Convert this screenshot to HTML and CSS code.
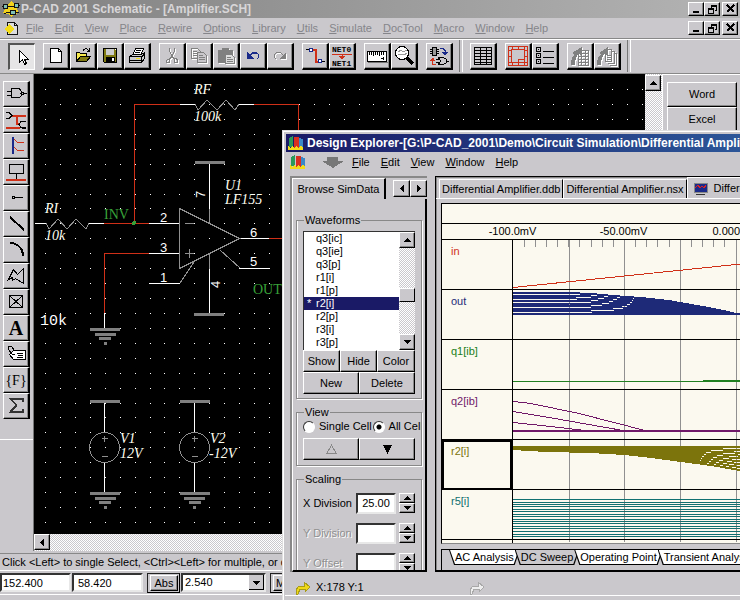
FILE: index.html
```html
<!DOCTYPE html>
<html lang="en">
<head>
    <meta charset="UTF-8">
    <meta name="viewport" content="width=device-width, initial-scale=1.0">
    <title>P-CAD 2001 Schematic - [Amplifier.SCH]</title>
    <link rel="stylesheet" href="styles.css">
</head>
<body>
    <!-- Schematic editor -->
    <div class="schematic">
        <header class="titlebar">
            <svg class="app-icon" width="18" height="16" viewBox="0 0 18 16">
                <path d="M9 0l3 3 5 1-2 4 2 4-5 1-3 3-3-3-5-1 2-4-2-4 5-1z" fill="#f2d21c"/>
                <path d="M1 3h4v4H1zM12 2h4v4h-4zM8 9h5v4H8z" fill="#7ec0b8" stroke="#111"/>
                <path d="M0 5h2M5 5h7M16 4h2M4 11h4M13 11h4M2 13l4-2" stroke="#111" fill="none"/>
            </svg>
            <h1>P-CAD 2001 Schematic - [Amplifier.SCH]</h1>
            <div class="win-buttons">
                <button type="button" aria-label="Minimize"><svg width="11" height="10"><path d="M2 8h6" stroke="#000" stroke-width="2"/></svg></button>
                <button type="button" aria-label="Restore"><svg width="11" height="10"><path d="M4 1h6M4 2h6M4.500 1v3M9.500 1v5h-2M1 4h6M1 5h6M1.500 4v5h5V4" fill="none" stroke="#000"/></svg></button>
                <button type="button" class="close" aria-label="Close"><svg width="11" height="10"><path d="M2 1l7 7M9 1L2 8" stroke="#000" stroke-width="2"/></svg></button>
            </div>
        </header>

        <nav class="menubar">
            <svg class="doc-icon" width="15" height="15" viewBox="0 0 15 15">
                <path d="M3.500 1.500h7l3 3v9h-10z" fill="#ddd" stroke="#111"/>
                <path d="M10.500 1.500v3h3" fill="none" stroke="#111"/>
                <path d="M5 3l5 5-5 5-5-5z" fill="#f4dc18"/>
            </svg>
            <a href="#"><u>F</u>ile</a>
            <a href="#"><u>E</u>dit</a>
            <a href="#"><u>V</u>iew</a>
            <a href="#"><u>P</u>lace</a>
            <a href="#"><u>R</u>ewire</a>
            <a href="#"><u>O</u>ptions</a>
            <a href="#"><u>L</u>ibrary</a>
            <a href="#"><u>U</u>tils</a>
            <a href="#"><u>S</u>imulate</a>
            <a href="#"><u>D</u>ocTool</a>
            <a href="#"><u>M</u>acro</a>
            <a href="#"><u>W</u>indow</a>
            <a href="#"><u>H</u>elp</a>
            <div class="win-buttons">
                <button type="button" aria-label="Minimize document"><svg width="11" height="10"><path d="M2 8h6" stroke="#000" stroke-width="2"/></svg></button>
                <button type="button" aria-label="Restore document"><svg width="11" height="10"><path d="M4 1h6M4 2h6M4.500 1v3M9.500 1v5h-2M1 4h6M1 5h6M1.500 4v5h5V4" fill="none" stroke="#000"/></svg></button>
                <button type="button" class="close" aria-label="Close document"><svg width="11" height="10"><path d="M2 1l7 7M9 1L2 8" stroke="#000" stroke-width="2"/></svg></button>
            </div>
        </nav>

        <div class="toolbar">
            <div class="tool-group">
                <button type="button" class="tool pressed" aria-label="Select"><svg viewBox="0 0 24 24"><path d="M9.500 5.500v12l3-3 2 5 2-1-2-4h4z" fill="#fff" stroke="#000"/></svg></button>
            </div>
            <div class="tool-group">
                <button type="button" class="tool" aria-label="New"><svg viewBox="0 0 24 24"><path d="M6.500 4.500h8l3 3v11h-11z" fill="#fff" stroke="#000"/><path d="M14.500 4.500v3h3" fill="none" stroke="#000"/></svg></button>
                <button type="button" class="tool" aria-label="Open"><svg viewBox="0 0 24 24"><path d="M5.500 17.500v-9h3l1 1h6v3" fill="#f6e94e" stroke="#000"/><path d="M5.500 17.500l4-5h10l-4 5z" fill="#807a12" stroke="#000"/><path d="M12 6.500c2-3 5-2 6 1M18.500 4v4M15.500 7.500h3" fill="none" stroke="#000"/></svg></button>
                <button type="button" class="tool" aria-label="Save"><svg viewBox="0 0 24 24"><path d="M5.500 4.500h13v14h-12l-1-1z" fill="#807a12" stroke="#000"/><path d="M8 5h8v6H8z" fill="#ccc"/><path d="M8 13h9v5H8z" fill="#000"/><path d="M14 14h2v3h-2zM17 5h1v1h-1z" fill="#fff"/></svg></button>
                <button type="button" class="tool" aria-label="Print"><svg viewBox="0 0 24 24"><path d="M7.500 11.500l3-7h8l-3 7z" fill="#fff" stroke="#000"/><path d="M11 6.500h5M10 8.500h5" stroke="#000"/><path d="M4.500 12.500l3-2h9l3-2v6l-3 4h-12z" fill="#ccc" stroke="#000"/><path d="M5 12.500h12M5 16.500h12M16.500 12v6M17 12.500l2-2" stroke="#000" fill="none"/><path d="M11 14h4v1h-4z" fill="#f4dc18"/></svg></button>
            </div>
            <div class="tool-group">
                <button type="button" class="tool" aria-label="Cut"><svg class="off" viewBox="0 0 24 24"><path d="M9.500 4v3l3 6 2 2M14.500 4v3l-3 6-2 2"/><path d="M7.500 15.500h2v3h-3v-2zM14.500 14.500h2l1 2v2h-3z"/></svg></button>
                <button type="button" class="tool" aria-label="Copy"><svg class="off" viewBox="0 0 24 24"><path d="M4.500 4.500h6l3 3v7h-9zM6 7.500h4M6 9.500h6M6 11.500h5"/><path d="M10.500 8.500h6l3 3v7h-9z" fill="#cac8cc"/><path d="M12 11.500h4M12 13.500h6M12 15.500h6"/></svg></button>
                <button type="button" class="tool" aria-label="Paste"><svg class="off" viewBox="0 0 24 24"><path d="M4 6h14v12H4zM8 4h6v3H8z" fill="#808080"/><path d="M11.500 10.500h6l3 3v6h-9z" fill="#ddd"/><path d="M13 13.500h4M13 15.500h6M13 17.500h6"/></svg></button>
                <button type="button" class="tool" aria-label="Undo"><svg viewBox="0 0 24 24"><path d="M8.500 11.500l3-3h4l2 2v3l-2 2M8.500 12.500l3-3h4l1 1" fill="none" stroke="#1a2a8a"/><path d="M6 8v7h7z" fill="#1a2a8a"/></svg></button>
                <button type="button" class="tool" aria-label="Redo"><svg class="off" viewBox="0 0 24 24"><path d="M15.500 11.500l-3-3h-4l-2 2v3l2 2"/><path d="M18 8v7h-7z" fill="#808080" stroke="none"/></svg></button>
            </div>
            <div class="tool-group">
                <button type="button" class="tool" aria-label="Wire"><svg viewBox="0 0 24 24"><path d="M8 5.500h4.500v12H16" fill="none" stroke="#d03018" stroke-width="2"/><path d="M3 5.500h4M18 17.500h4" stroke="#000"/><path d="M6.500 4.500h3v3h-3zM15.500 15.500h3v3h-3z" fill="#fff" stroke="#1a2a8a"/></svg></button>
                <button type="button" class="tool" aria-label="Rename net"><svg viewBox="0 0 24 24"><text x="2" y="8">NET0</text><path d="M2 10.500h20" stroke="#d03018"/><path d="M12 10v2M9 12h6l-3 3z" fill="#d03018" stroke="#d03018"/><text x="2" y="22">NET1</text></svg></button>
            </div>
            <div class="tool-group">
                <button type="button" class="tool" aria-label="Measure"><svg viewBox="0 0 24 24"><path d="M2.500 7.500h19v10h-19z" fill="#fff" stroke="#000"/><path d="M4.500 8v3M6.500 8v3M8.500 8v4M10.500 8v3M12.500 8v3M14.500 8v4M16.500 8v3M18.500 8v3M18.500 13v3M16 14.500h3" stroke="#000"/><path d="M3 18.500h20" stroke="#777"/></svg></button>
                <button type="button" class="tool" aria-label="Zoom"><svg viewBox="0 0 24 24"><path d="M15 14l6 6" stroke="#000" stroke-width="3"/><circle cx="10" cy="9" r="6.500" fill="#fff" stroke="#000"/><path d="M6 8l3-2 2 2 4-2M6 11l3-1 3 1 3-2" fill="none" stroke="#999"/></svg></button>
            </div>
            <div class="tool-group">
                <button type="button" class="tool" aria-label="Gates"><svg viewBox="0 0 24 24"><path d="M5.500 3.500h4v8h-4zM3 5.500h2M3 7.500h2M3 9.500h2M10 5.500h2M10 7.500h2M10 9.500h2" fill="#999" stroke="#000"/><path d="M11.500 13.500h3c4 0 5 2 5 3.500s-1 3.500-5 3.500h-3l2-3.500zM9 15.500h3M9 18.500h3M20 17.500h2" fill="none" stroke="#000"/><path d="M13 4.500h3l2 2v3" fill="none" stroke="#1a2a8a"/><path d="M15 8h6l-3 4z" fill="#1a2a8a"/><path d="M9 20.500H5.500V16" fill="none" stroke="#d03018"/><path d="M3 17h5l-2-4z" fill="#d03018"/></svg></button>
            </div>
            <div class="divider"></div>
            <div class="tool-group">
                <button type="button" class="tool" aria-label="Table"><svg viewBox="0 0 24 24"><path d="M3.500 3.500h17v17h-17zM3 6.500h18M3 9.500h18M3 12.500h18M3 15.500h18M3 18.500h18M9.500 3v18M15.500 3v18" fill="none" stroke="#000"/></svg></button>
            </div>
            <div class="tool-group">
                <button type="button" class="tool" aria-label="Sheet"><svg viewBox="0 0 24 24"><path d="M2.500 2.500h19v19h-19zM5.500 5.500h13v13h-13zM12.500 15.500h6M12.500 15v3M6 3v2M12 3v2M18 3v2M6 19v2M12 19v2M18 19v2M3 6h2M3 12h2M3 18h2M19 6h2M19 12h2M19 18h2" fill="none" stroke="#d03018"/></svg></button>
                <button type="button" class="tool" aria-label="List"><svg viewBox="0 0 24 24"><path d="M3.500 3.500h4v4h-4zM3.500 9.500h4v4h-4zM3.500 15.500h4v4h-4zM10 7.500h11M10 13.500h11M10 19.500h11M5 5.500h1M5 11.500h1M5 17.500h1" fill="none" stroke="#000"/></svg></button>
            </div>
            <div class="tool-group">
                <button type="button" class="tool" aria-label="To table"><svg class="off" viewBox="0 0 24 24"><path d="M3 21c0-6 1-9 4-10L4 9l10-6v9l-3-2c-3 2-4 5-4 11z" fill="#808080" stroke="none"/><path d="M10.500 6.500h10v15h-10zM10 9.500h11M10 12.500h11M10 15.500h11M10 18.500h11M13.500 6v15M17.500 6v15"/></svg></button>
                <button type="button" class="tool" aria-label="To pages"><svg class="off" viewBox="0 0 24 24"><path d="M10.500 5.500h6v12h-6zM17 7.500h2v12h-6M19 9.500h2v12h-6" /><path d="M2 21c0-6 1-9 4-10L4 9l9-6v9l-3-2c-3 2-4 5-4 11z" fill="#808080" stroke="none"/><path d="M12 11.500h4M12 13.500h4M12 15.500h4"/></svg></button>
            </div>
            <div class="divider"></div>
        </div>

        <div class="workspace">
            <aside class="palette">
                <div class="palette-tools">
                    <button type="button" class="tool" aria-label="Place part"><svg viewBox="0 0 24 24"><path d="M7.500 6.500h6c3 0 4 3 4 5s-1 4-4 4h-6zM3 9.500h4M3 13.500h4M20 11.500h3" fill="none" stroke="#000"/><circle cx="18.500" cy="11.500" r="1.500" fill="none" stroke="#000"/></svg></button>
                    <button type="button" class="tool" aria-label="Place wire"><svg viewBox="0 0 24 24"><path d="M8 7.500h14M12.500 7v9M12 15.500h4M2 19.500h14" stroke="#d03018" stroke-width="2" fill="none"/><path d="M2 4.500h3l3 3-3 3H2M22 13.500h-5l-2 3 2 3h5M18 20.500h4" fill="none" stroke="#000"/></svg></button>
                    <button type="button" class="tool" aria-label="Place bus"><svg viewBox="0 0 24 24"><path d="M9 3v17" stroke="#1a2a8a" stroke-width="2"/><path d="M10 5l3 3h7M10 13l3 3h7" fill="none" stroke="#d03018"/></svg></button>
                    <button type="button" class="tool" aria-label="Place port"><svg viewBox="0 0 24 24"><path d="M5.500 4.500h14v9h-14zM12.500 14v5" fill="none" stroke="#000"/><path d="M2 19.500h20" stroke="#d03018" stroke-width="2"/></svg></button>
                    <button type="button" class="tool" aria-label="Place pin"><svg viewBox="0 0 24 24"><path d="M8.500 10.500h2v2h-2zM11 11.500h8" fill="none" stroke="#000"/></svg></button>
                    <button type="button" class="tool" aria-label="Place line"><svg viewBox="0 0 24 24"><path d="M6 5l14 13" stroke="#000" stroke-width="2"/></svg></button>
                    <button type="button" class="tool" aria-label="Place arc"><svg viewBox="0 0 24 24"><path d="M6 5c7 0 13 5 13 13" fill="none" stroke="#000" stroke-width="2"/></svg></button>
                    <button type="button" class="tool" aria-label="Place polygon"><svg viewBox="0 0 24 24"><path d="M4.500 15.500l5-10 4 5 6-6v15l-8-5-3 2v-3z" fill="none" stroke="#000"/></svg></button>
                    <button type="button" class="tool" aria-label="Place connection point"><svg viewBox="0 0 24 24"><path d="M5.500 5.500h13v12h-13zM6 6l12 11M18 6L6 17" fill="none" stroke="#000"/></svg></button>
                    <button type="button" class="tool letter" aria-label="Place text">A</button>
                    <button type="button" class="tool" aria-label="Place attribute"><svg viewBox="0 0 24 24"><path d="M5.500 12.500l4-4h12v9h-12z" fill="#fff" stroke="#000"/><path d="M13 11.500h6M14 13.500h5M13 15.500h6M9 12.500h2" stroke="#000"/><path d="M9 13L4 7V4h3l4 5" fill="none" stroke="#000"/></svg></button>
                    <button type="button" class="tool field" aria-label="Place field">{F}</button>
                    <button type="button" class="tool" aria-label="Place symbol"><svg viewBox="0 0 24 24"><path d="M18.500 8v-3h-12l6 6-6 7h12v-3" fill="none" stroke="#333" stroke-width="2"/></svg></button>
                </div>
            </aside>

            <div class="sheet">
                <svg class="drawing">
                    <g transform="translate(-34 -74)">
                        <path id="grid-dots" fill="#fff"/>

                        <g class="wire">
                            <path d="M180 104.500H134.500V223.500M254 104.500h44.500V160M104 223.500h45M104.500 313v-59.500h44.500M269 238.500h60"/>
                        </g>
                        <g class="pin">
                            <path d="M180 104.500h15M239 104.500h15M35 223.500h11M89 223.500h15M149 223.500h31M149 253.500h31M104.500 313v15M149 283.500h31M239 238.500h30M240 268.500h29M209.500 164v45M209.500 269v44"/>
                            <path d="M104.500 403v29M104.500 462v30M194.500 403v29M194.500 462v30"/>
                        </g>
                        <g class="symbol">
                            <path d="M195 104l3 6 9-10 10 10 9-10 9 10 4-6M46 223l3 6 9-10 9 10 9-10 10 10 3-6"/>
                            <path d="M179.500 208.500l60 30-60 30zM209.500 209v14M209.500 253v16M220 250l20 18M194 262l-14 21M185 223.500h9M185 253.500h9M189.500 249v9"/>
                            <circle cx="104.500" cy="447.500" r="15"/>
                            <circle cx="194.500" cy="447.500" r="15"/>
                            <path d="M102 438.500h6M104.500 436v6M102 456.500h6M192 438.500h6M194.500 436v6M192 456.500h6"/>
                        </g>
                        <path fill="#808080" d="M195 161h30v3h-30zM194 313h30v3h-30zM90 400h30v3H90zM180 400h30v3h-30z"/>
                        <g id="grounds" fill="#808080">
                            <path d="M90 328h30v3H90zM95 333h21v3H95zM99 337h12v3H99zM104 342h3v3h-3z"/>
                            <path d="M90 492h30v3H90zM95 497h21v3H95zM99 501h12v3H99zM104 506h3v3h-3z"/>
                            <path d="M180 492h30v3h-30zM184 497h21v3h-21zM189 501h12v3h-12zM193 506h3v3h-3z"/>
                        </g>
                        <circle cx="134" cy="223" r="2" fill="#38a038"/>

                        <g class="part-text">
                            <text x="194" y="94">RF</text>
                            <text x="194" y="121">100k</text>
                            <text x="45" y="213">RI</text>
                            <text x="45" y="240">10k</text>
                            <text x="225" y="190">U1</text>
                            <text x="225" y="204">LF155</text>
                            <text x="120" y="443">V1</text>
                            <text x="120" y="458">12V</text>
                            <text x="210" y="443">V2</text>
                            <text x="209" y="458">-12V</text>
                        </g>
                        <g class="net-text">
                            <text x="104" y="219">INV</text>
                            <text x="253" y="294">OUT1</text>
                        </g>
                        <text class="free-text" x="40" y="325">10k</text>
                        <g class="pin-text">
                            <text x="160" y="222">2</text>
                            <text x="160" y="252">3</text>
                            <text x="160" y="282">1</text>
                            <text x="250" y="237">6</text>
                            <text x="250" y="266">5</text>
                            <text transform="translate(205 198) rotate(-90)">7</text>
                            <text transform="translate(220 288) rotate(-90)">4</text>
                        </g>
                    </g>
                </svg>
                <div class="scroll-v">
                    <button type="button" class="arrow" aria-label="Scroll up"><svg width="7" height="4"><path d="M0 4l3.500-4L7 4z"/></svg></button>
                </div>
                <div class="scroll-h">
                    <button type="button" class="arrow" aria-label="Scroll left"><svg width="4" height="7"><path d="M4 0L0 3.500 4 7z"/></svg></button>
                </div>
            </div>

            <aside class="office">
                <button type="button">Word</button>
                <button type="button">Excel</button>
            </aside>
        </div>

        <p class="hint">Click &lt;Left&gt; to single Select, &lt;Ctrl&gt;&lt;Left&gt; for multiple, or drag for block select.</p>
        <footer class="fields">
            <input type="text" class="coord" aria-label="X position" value="152.400">
            <input type="text" class="coord second" aria-label="Y position" value="58.420">
            <div class="well"><button type="button">Abs</button></div>
            <select aria-label="Grid spacing"><option>2.540</option></select>
            <div class="well"><button type="button" class="macro">M</button></div>
        </footer>
    </div>

    <!-- Design Explorer window, lies over the editor -->
    <div class="explorer">
        <header class="ex-title">
            <svg width="16" height="16" viewBox="0 0 16 16"><path d="M1 3l4-2v11H1z" fill="#2a9a58"/><path d="M6 2h5v11H6z" fill="#d83020"/><path d="M11 3l4 1v8h-4z" fill="#3a88c8"/><path d="M0 11l2 2 2-2 2 2 2-2 2 2 2-2 3 1v3H0z" fill="#f4dc18"/></svg>
            <h2>Design Explorer-[G:\P-CAD_2001\Demo\Circuit Simulation\Differential Amplifier.ddb]</h2>
        </header>
        <nav class="ex-menu">
            <svg width="16" height="16" viewBox="0 0 16 16"><path d="M1 3l4-2v11H1z" fill="#2a9a58"/><path d="M6 2h5v11H6z" fill="#d83020"/><path d="M11 3l4 1v8h-4z" fill="#3a88c8"/><path d="M0 11l2 2 2-2 2 2 2-2 2 2 2-2 3 1v3H0z" fill="#f4dc18"/></svg>
            <svg class="down-icon" width="22" height="11" viewBox="0 0 22 11"><path d="M5 0h11v4h6L11 11 0 4h5z" fill="#777"/></svg>
            <a href="#"><u>F</u>ile</a>
            <a href="#"><u>E</u>dit</a>
            <a href="#"><u>V</u>iew</a>
            <a href="#"><u>W</u>indow</a>
            <a href="#"><u>H</u>elp</a>
        </nav>

        <div class="ex-body">
            <section class="browser">
                <div class="browser-tabs">
                    <button type="button" class="browser-tab">Browse SimData</button>
                    <button type="button" class="arrow" aria-label="Previous tab"><svg width="4" height="7"><path d="M4 0L0 3.500 4 7z"/></svg></button>
                    <button type="button" class="arrow" aria-label="Next tab"><svg width="4" height="7"><path d="M0 0l4 3.500L0 7z"/></svg></button>
                </div>
                <div class="browser-page">
                    <fieldset class="waveforms">
                        <legend>Waveforms</legend>
                        <div class="wave-list">
                            <ul>
                                <li>q3[ic]</li>
                                <li>q3[ie]</li>
                                <li>q3[p]</li>
                                <li>r1[i]</li>
                                <li>r1[p]</li>
                                <li class="selected">r2[i]</li>
                                <li>r2[p]</li>
                                <li>r3[i]</li>
                                <li>r3[p]</li>
                            </ul>
                            <div class="list-scroll">
                                <button type="button" class="arrow" aria-label="List up"><svg width="7" height="4"><path d="M0 4l3.500-4L7 4z"/></svg></button>
                                <div class="thumb"></div>
                                <button type="button" class="arrow" aria-label="List down"><svg width="7" height="4"><path d="M0 0h7L3.500 4z"/></svg></button>
                            </div>
                        </div>
                        <div class="row three">
                            <button type="button">Show</button>
                            <button type="button">Hide</button>
                            <button type="button">Color</button>
                        </div>
                        <div class="row">
                            <button type="button">New</button>
                            <button type="button">Delete</button>
                        </div>
                    </fieldset>

                    <fieldset class="view">
                        <legend>View</legend>
                        <div class="radios">
                            <label><input type="radio" name="cells"> Single Cell</label>
                            <label><input type="radio" name="cells" checked> All Cells</label>
                        </div>
                        <div class="row">
                            <button type="button" aria-label="Previous cell"><svg width="11" height="10"><path d="M1 9l4.500-8L10 9z" fill="none" stroke="#888"/></svg></button>
                            <button type="button" aria-label="Next cell"><svg width="9" height="9"><path d="M0 0h9L4.500 9z"/></svg></button>
                        </div>
                    </fieldset>

                    <fieldset class="scaling">
                        <legend>Scaling</legend>
                        <div class="scale-row">
                            <label for="x-div">X Division</label>
                            <input type="text" id="x-div" value="25.00">
                            <div class="spin">
                                <button type="button" aria-label="X up"><svg width="7" height="4"><path d="M0 4l3.500-4L7 4z"/></svg></button>
                                <button type="button" aria-label="X down"><svg width="7" height="4"><path d="M0 0h7L3.500 4z"/></svg></button>
                            </div>
                        </div>
                        <div class="scale-row disabled">
                            <label for="y-div">Y Division</label>
                            <input type="text" id="y-div">
                            <div class="spin">
                                <button type="button" aria-label="Y up"><svg width="7" height="4"><path d="M0 4l3.500-4L7 4z"/></svg></button>
                                <button type="button" aria-label="Y down"><svg width="7" height="4"><path d="M0 0h7L3.500 4z"/></svg></button>
                            </div>
                        </div>
                        <div class="scale-row disabled">
                            <label for="y-off">Y Offset</label>
                            <input type="text" id="y-off">
                            <div class="spin">
                                <button type="button" aria-label="Offset up"><svg width="7" height="4"><path d="M0 4l3.500-4L7 4z"/></svg></button>
                                <button type="button" aria-label="Offset down"><svg width="7" height="4"><path d="M0 0h7L3.500 4z"/></svg></button>
                            </div>
                        </div>
                    </fieldset>
                </div>
            </section>

            <section class="document">
                <div class="doc-tabs">
                    <button type="button">Differential Amplifier.ddb</button>
                    <button type="button">Differential Amplifier.nsx</button>
                    <button type="button" class="active">
                        <svg width="16" height="13" viewBox="0 0 16 13"><path d="M1 1h13v9H1z" fill="#1a2a8a" stroke="#888"/><path d="M2 6l3-3 2 3 2-2 2 2 2-3" fill="none" stroke="#e02020"/><path d="M3 12h9" stroke="#333"/></svg>
                        Differential Amplifier.sdf
                    </button>
                </div>
                <div class="chart">
                    <div class="chart-head"></div>
                    <div class="axis"><span>-100.0mV</span><span>-50.00mV</span><span>0.000mV</span></div>
                    <div class="chart-body">
                        <div class="names">
                            <div class="c-in">in</div>
                            <div class="c-out">out</div>
                            <div class="c-q1">q1[ib]</div>
                            <div class="c-q2">q2[ib]</div>
                            <div class="c-r2 current">r2[i]</div>
                            <div class="c-r5">r5[i]</div>
                        </div>
                        <svg class="plots">
                            <g transform="translate(-512 -240)">
                                <path stroke="#909090" d="M568.500 239v303M623.500 239v303M679.500 239v303M735.500 239v303"/>
                                <path id="ticks" stroke="#909090"/>
                                <path stroke="#000" d="M512 289.500h600M512 339.500h600M512 389.500h600M512 439.500h600M512 489.500h600M512 539.500h600"/>
                                <path class="c-in" d="M512 287.500L735 264.500h20"/>
                                <g id="out-fan" class="c-out"></g>
                                <path class="c-q1" d="M512 381.500h600M702 380.500h400"/>
                                <path class="c-q2" d="M512 430.500h600M512 431.500h600M512 401.500l18 2 48 10 66 17M512 411.500l36 6 74 13M512 422.500l38 4 34 4"/>
                                <g id="r2-fan" class="c-r2"></g>
                                <path id="r5-lines" class="c-r5"/>
                            </g>
                        </svg>
                    </div>
                </div>
                <div class="sheet-tabs">
                    <button type="button"><span>AC Analysis</span></button>
                    <button type="button" class="active"><span>DC Sweep</span></button>
                    <button type="button"><span>Operating Point</span></button>
                    <button type="button"><span>Transient Analysis</span></button>
                </div>
            </section>
        </div>

        <footer class="ex-status">
            <svg width="15" height="14" viewBox="0 0 15 14"><path d="M0 13V9l3-4h5V1l6 5-5 5V8H4l-2 5z" fill="#f0d818" stroke="#a89c18"/></svg>
            <span>X:178 Y:1</span>
            <svg width="15" height="14" viewBox="0 0 15 14"><path d="M0 13V9l3-4h5V1l6 5-5 5V8H4l-2 5z" fill="#eee" stroke="#a8a8a8"/></svg>
        </footer>
    </div>

    <script>
        // Grid dots of the schematic sheet
        let dots = '';
        for (let x = 45; x < 1400; x += 14.93) {
            for (let y = 89; y < 1000; y += 14.93) {
                dots += 'M' + Math.round(x) + ' ' + Math.round(y) + 'h1v1h-1z';
            }
        }
        document.getElementById('grid-dots').setAttribute('d', dots);

        // Axis ticks, ten to each 50mV
        let ticks = '';
        for (let i = 1; i < 60; i++) {
            ticks += 'M' + (Math.floor(512 + i * 11.15) + 0.5) + ' 240v7';
        }
        document.getElementById('ticks').setAttribute('d', ticks);

        // Draw a family of curves between a flat edge and an envelope
        function drawFan(id, envelope, count, base) {
            const group = document.getElementById(id);
            for (let k = 0; k < count; k++) {
                const points = envelope.map(function (p) {
                    return p[0] + ',' + (base + (p[1] - base) * k / (count - 1));
                });
                const line = document.createElementNS('http://www.w3.org/2000/svg', 'polyline');
                line.setAttribute('points', points.join(' '));
                group.appendChild(line);
            }
        }

        drawFan('out-fan', [[512, 293], [568, 293], [590, 294], [612, 296], [640, 298], [668, 301],
            [679, 303], [702, 307], [718, 310], [735, 314], [745, 314]], 9, 314);
        drawFan('r2-fan', [[512, 449], [545, 451], [590, 452], [623, 454], [650, 457], [680, 461],
            [710, 465], [745, 471]], 9, 447);

        const levels = [499, 502, 504, 506, 509, 511, 514, 516, 519, 521, 523, 526, 528, 531, 534, 536];
        document.getElementById('r5-lines').setAttribute('d', levels.map(function (y) {
            return 'M512 ' + y + '.5h600';
        }).join(''));
    </script>
</body>
</html>
```
FILE: styles.css
```css
/* Shared look of both windows */
* {
    box-sizing: border-box;
}

body {
    margin: 0;
    height: 100vh;
    overflow: hidden;
    position: relative;
    font-family: "Liberation Sans", Arial, sans-serif;
    font-size: 11px;
    line-height: 13px;
    color: #000;
    background-color: #cac8cc;
}

button, input, select {
    font-family: inherit;
    font-size: 11px;
    line-height: 13px;
    color: #000;
    border-radius: 0;
    margin: 0;
    padding: 0;
}

button {
    display: flex;
    align-items: center;
    justify-content: center;
    background-color: #cac8cc;
    border: 1px solid;
    border-color: #fff #000 #000 #fff;
    box-shadow: inset -1px -1px #888;
}

svg {
    display: block;
    flex-shrink: 0;
    shape-rendering: crispEdges;
}

a {
    color: inherit;
    text-decoration: none;
}

h1, h2 {
    margin: 0;
    font-size: 12px;
    line-height: 16px;
    white-space: nowrap;
}

/* Schematic editor */
.schematic {
    height: 100%;
    display: flex;
    flex-direction: column;
    padding-bottom: 5px;
}

.titlebar {
    display: flex;
    align-items: center;
    height: 18px;
    padding: 0 2px;
    background: linear-gradient(to right, #808080, #b4b4b4);
    color: #d8d6d8;
}

.titlebar h1 {
    margin-left: 1px;
    flex: 1;
}

.win-buttons {
    display: flex;
    margin-left: auto;
}

.win-buttons button {
    width: 16px;
    height: 14px;
}

.win-buttons .close {
    margin-left: 2px;
}

.menubar {
    display: flex;
    align-items: center;
    gap: 11px;
    height: 20px;
    padding: 0 2px 0 4px;
    color: #85858a;
}

.menubar .doc-icon {
    margin-right: -4px;
}

.toolbar {
    display: flex;
    align-items: center;
    gap: 8px;
    height: 36px;
    padding-left: 8px;
    border-top: 1px solid #888;
    border-bottom: 1px solid #888;
    box-shadow: inset 0 1px #fff;
}

.tool-group {
    display: flex;
}

.tool {
    width: 27px;
    height: 27px;
    border-width: 1px 2px 2px 1px;
}

.tool svg {
    width: 24px;
    height: 24px;
}

.tool text {
    font-family: "Liberation Mono", monospace;
    font-size: 8px;
    font-weight: bold;
}

.tool.pressed {
    border-width: 2px 1px 1px 2px;
    border-color: #555 #fff #fff #555;
    box-shadow: none;
    background-color: #e6e5e6;
}

.tool .off {
    fill: none;
    stroke: #808080;
    filter: drop-shadow(1px 1px 0 #fff);
}

.divider {
    width: 4px;
    height: 32px;
    margin: 0 -1px 0 -2px;
    border-left: 1px solid #777;
    border-right: 1px solid #fff;
}

.workspace {
    flex: 1;
    display: flex;
    min-height: 0;
}

.palette {
    width: 34px;
    border-right: 1px solid #777;
}

.palette-tools {
    padding: 7px 3px 20px;
    border-bottom: 1px solid #fff;
}

.palette .tool {
    height: 26px;
    border-width: 1px 2px 1px 1px;
}

.tool.letter, .tool.field {
    font-family: "Liberation Serif", serif;
    font-size: 20px;
    font-weight: bold;
}

.tool.field {
    font-size: 14px;
    font-weight: normal;
}

.sheet {
    flex: 1;
    display: grid;
    grid-template-columns: 1fr 17px;
    grid-template-rows: 1fr 17px;
    min-width: 0;
}

.drawing {
    width: 100%;
    height: 100%;
    background-color: #000;
}

.scroll-v, .scroll-h, .list-scroll {
    background: repeating-conic-gradient(#fff 0 25%, #cac8cc 0 50%) 0 0 / 2px 2px;
}

.scroll-v {
    padding-top: 1px;
}

.scroll-h {
    grid-column: 1 / 3;
}

.arrow {
    width: 16px;
    height: 16px;
}

.office {
    width: 78px;
    padding: 7px 4px;
    border-top: 1px solid #fff;
    border-left: 1px solid #fff;
}

.office button {
    width: 70px;
    height: 25px;
}

.hint {
    margin: 2px 0 0;
    height: 18px;
    padding: 2px 2px 0;
    border-top: 1px solid #888;
    border-bottom: 1px solid #fff;
    white-space: nowrap;
    overflow: hidden;
}

.fields {
    display: flex;
    gap: 1px;
    height: 22px;
    margin-top: 2px;
    border-bottom: 1px solid #fff;
}

.fields .coord {
    width: 71px;
    height: 19px;
    padding: 0 1px;
    background-color: #fff;
    border: 2px solid;
    border-color: #333 #e8e8e8 #e8e8e8 #333;
}

.fields .second {
    padding-left: 4px;
}

.well {
    width: 33px;
    height: 20px;
    margin-left: 3px;
    padding: 1px 1px 1px 2px;
    border: 1px solid;
    border-color: #222 #000 #000 #222;
}

.well button {
    width: 28px;
    height: 16px;
}

.well .macro {
    justify-content: flex-start;
    padding-left: 2px;
}

.fields select {
    width: 85px;
    height: 19px;
    padding: 0 2px;
    appearance: none;
    border: 2px solid;
    border-color: #333 #e8e8e8 #e8e8e8 #333;
    background:
        linear-gradient(#000, #000) right 4px top 6px / 7px 1px no-repeat,
        linear-gradient(#000, #000) right 5px top 7px / 5px 1px no-repeat,
        linear-gradient(#000, #000) right 6px top 8px / 3px 1px no-repeat,
        linear-gradient(#000, #000) right 7px top 9px / 1px 1px no-repeat,
        linear-gradient(#cac8cc, #cac8cc) right 1px top 0 / 14px 14px no-repeat,
        linear-gradient(#000, #000) right 0 top 0 / 15px 15px no-repeat,
        #fff;
}

/* Schematic drawing */
.wire path {
    fill: none;
    stroke: #d03018;
}

.pin path {
    fill: none;
    stroke: #fff;
}

.symbol {
    fill: none;
    stroke: #909090;
}

.part-text text {
    font-family: "Liberation Serif", serif;
    font-style: italic;
    font-size: 14px;
    fill: #fffff0;
}

.net-text text {
    font-family: "Liberation Serif", serif;
    font-size: 14px;
    fill: #38a038;
}

.free-text {
    font-family: "Liberation Mono", monospace;
    font-size: 15px;
    fill: #fff;
}

.pin-text text {
    font-size: 13px;
    fill: #fff;
}

/* Design Explorer window */
.explorer {
    position: absolute;
    top: 130px;
    left: 282px;
    right: 0;
    bottom: 0;
    display: flex;
    flex-direction: column;
    padding: 2px 0 4px 2px;
    overflow: hidden;
    background-color: #cac8cc;
    border-top: 1px solid #e0dfe0;
    border-left: 1px solid #e0dfe0;
    box-shadow: inset 1px 1px #fff;
}

.ex-title {
    display: flex;
    align-items: center;
    height: 18px;
    margin: 1px 0 0 1px;
    padding-left: 2px;
    gap: 3px;
    overflow: hidden;
    color: #fff;
    background: linear-gradient(to right, #1a1a66, #2c5698);
}

.ex-menu {
    display: flex;
    align-items: center;
    gap: 11px;
    height: 20px;
    padding-left: 5px;
}

.ex-menu .down-icon {
    margin: 0 -3px 0 5px;
}

.ex-body {
    flex: 1;
    display: flex;
    gap: 8px;
    min-height: 0;
    margin: 4px 0 0 5px;
}

.browser {
    display: flex;
    flex-direction: column;
    width: 137px;
    border-top: 2px solid #888;
    border-left: 2px solid #888;
}

.browser-tabs {
    display: flex;
    align-items: center;
    height: 21px;
}

.browser-tab {
    width: 94px;
    height: 21px;
    margin-right: auto;
    border-width: 1px 2px 0 1px;
    box-shadow: none;
}

.browser-tabs .arrow {
    width: 17px;
    height: 17px;
}

.browser-page {
    flex: 1;
    min-height: 0;
    overflow: hidden;
    padding: 15px 3px 0 3px;
    border-left: 1px solid #fff;
    border-right: 2px solid #000;
    border-bottom: 2px solid #000;
}

fieldset {
    min-width: 0;
    margin: 0 0 7px;
    padding: 4px 6px 4px;
    border: 1px solid #888;
    box-shadow: inset 1px 0 #fff, 1px 1px #fff;
}

legend {
    margin-left: 1px;
    padding: 0 1px;
}

.wave-list {
    display: flex;
    height: 119px;
    background-color: #fff;
    border-top: 1px solid #333;
    border-left: 1px solid #333;
}

.wave-list ul {
    flex: 1;
    margin: 0;
    padding: 0;
    list-style: none;
}

.wave-list li {
    height: 13px;
    padding-left: 12px;
}

.wave-list .selected {
    position: relative;
    color: #fff;
    background-color: #1a1a66;
}

.wave-list .selected::before {
    content: "*";
    position: absolute;
    left: 3px;
}

.list-scroll {
    display: flex;
    flex-direction: column;
}

.thumb {
    height: 14px;
    margin: 40px 0 auto;
    background-color: #cac8cc;
    border: 1px solid;
    border-color: #fff #000 #000 #fff;
}

.row {
    display: grid;
    grid-template-columns: 1fr 1fr;
}

.row.three {
    grid-template-columns: 37px 37px 1fr;
}

.row button {
    height: 22px;
}

.view {
    padding: 0 6px 5px;
}

.radios {
    display: flex;
    gap: 1px;
    height: 19px;
    white-space: nowrap;
    overflow: hidden;
    margin-right: -6px;
}

.radios label {
    display: flex;
    gap: 4px;
    height: 15px;
    align-items: center;
}

.radios input {
    appearance: none;
    width: 12px;
    height: 12px;
    border: 1px solid;
    border-color: #333 #fff #fff #333;
    border-radius: 50%;
    background-color: #fff;
}

.radios input:checked {
    background-image: radial-gradient(circle, #000 2px, transparent 3px);
}

.scaling {
    height: 150px;
    padding-top: 0;
}

.scale-row {
    display: flex;
    align-items: center;
    height: 22px;
    margin: 6px 0 8px;
}

.scale-row label {
    flex: 1;
    white-space: nowrap;
}

.scale-row.disabled label {
    color: #909090;
    text-shadow: 1px 1px #fff;
}

.scale-row input {
    width: 40px;
    height: 21px;
    margin-right: 3px;
    text-align: center;
    border: 2px solid;
    border-color: #333 #e8e8e8 #e8e8e8 #333;
    background-color: #fff;
}

.spin button {
    width: 16px;
    height: 10px;
}

.document {
    flex: 1;
    display: flex;
    flex-direction: column;
    min-width: 0;
    border: 1px solid #000;
    border-right: 0;
    border-bottom-width: 2px;
    box-shadow: inset 1px 1px #888;
}

.doc-tabs {
    display: flex;
    align-items: flex-end;
    height: 22px;
    padding-left: 3px;
    border-bottom: 1px solid #fff;
    overflow: hidden;
}

.doc-tabs button {
    flex-shrink: 0;
    height: 19px;
    padding: 0 2px;
    border-width: 1px 1px 0;
    box-shadow: none;
}

.doc-tabs .active {
    height: 21px;
    gap: 5px;
    padding: 0 5px;
}

/* Waveform chart */
.chart {
    flex: 1;
    display: flex;
    flex-direction: column;
    min-height: 0;
    margin: 4px 0 0 5px;
    border: 1px solid #000;
    border-right: 0;
    border-bottom: 1px solid #888;
    background-color: #fbf9ef;
}

.chart-head {
    height: 20px;
    border-bottom: 1px solid #000;
}

.axis {
    display: flex;
    height: 15px;
    padding: 1px 0 0 15px;
    overflow: hidden;
}

.axis span {
    flex: 0 0 111px;
    text-align: center;
}

.chart-body {
    flex: 1;
    display: flex;
    min-height: 0;
    overflow: hidden;
    border-top: 1px solid #000;
}

.names {
    width: 71px;
    border-right: 1px solid #000;
}

.names div {
    height: 50px;
    padding: 5px 9px;
    border-bottom: 1px solid #000;
}

.names .current {
    padding: 3px 7px;
    border: 2px solid #000;
}

.plots {
    flex: 1;
    height: 100%;
    min-width: 0;
}

.plots path, .plots polyline {
    fill: none;
}

.plots polyline {
    stroke-width: 2px;
}

.c-in { color: #d03018; }
.c-out { color: #1e2a78; }
.c-q1 { color: #208020; }
.c-q2 { color: #701868; }
.c-r2 { color: #7c740c; }
.c-r5 { color: #107070; }

.plots [class^="c-"] {
    stroke: currentColor;
}

.sheet-tabs {
    display: flex;
    height: 21px;
    margin: 5px 0 0 5px;
    padding-left: 7px;
    border-top: 1px solid #000;
    border-left: 1px solid #000;
    overflow: hidden;
}

.sheet-tabs button {
    position: relative;
    flex-shrink: 0;
    height: 15px;
    margin-right: -5px;
    padding: 0 6px;
    border: 0;
    box-shadow: none;
    background-color: #000;
    clip-path: polygon(0 0, 100% 0, calc(100% - 5px) 100%, 5px 100%);
}

.sheet-tabs button::before {
    content: "";
    position: absolute;
    inset: 0 1px 1px;
    background-color: #fff;
    clip-path: polygon(0 0, 100% 0, calc(100% - 5px) 100%, 5px 100%);
}

.sheet-tabs .active::before {
    background-color: #cac8cc;
}

.sheet-tabs span {
    position: relative;
}

.ex-status {
    display: flex;
    align-items: center;
    gap: 5px;
    height: 24px;
    padding: 8px 0 0 11px;
    border-bottom: 1px solid #fff;
}

.ex-status span {
    width: 149px;
}
```
